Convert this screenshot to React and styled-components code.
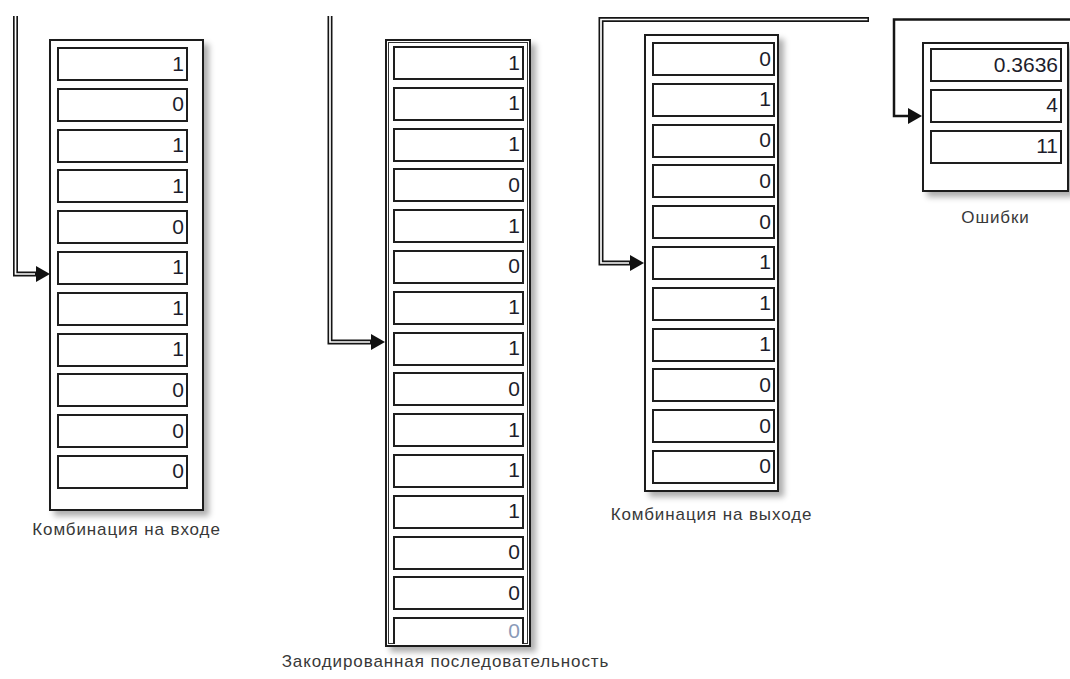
import styled, { createGlobalStyle } from "styled-components";

const GlobalStyle = createGlobalStyle`
    html, body {
        margin: 0;
        padding: 0;
        background: #fff;
        overflow: hidden;
    }
`;

const Canvas = styled.div`
    position: relative;
    width: 1070px;
    height: 679px;
    background: #fff;
    font-family: "Liberation Sans", Arial, sans-serif;
`;

const Wires = styled.svg`
    position: absolute;
    left: 0;
    top: 0;
`;

const Node = styled.div`
    position: absolute;
    left: ${p => p.$x}px;
    top: ${p => p.$y}px;
    width: ${p => p.$w}px;
    display: flex;
    flex-direction: column;
    align-items: center;
`;

const Block = styled.div`
    box-sizing: border-box;
    width: 100%;
    height: ${p => p.$h}px;
    border: 2px solid #1c1c1c;
    background: #fff;
    padding: ${p => p.$pad};
    box-shadow: ${p => p.$double ? "inset 0 0 0 1px #fff, inset 0 0 0 2px #333, " : ""}5px 5px 6px rgba(0, 0, 0, 0.32);
`;

const Column = styled.div`
    display: flex;
    flex-direction: column;
    gap: 6.8px;
`;

const Cell = styled.div`
    box-sizing: border-box;
    flex: none;
    width: ${p => p.$w}px;
    height: ${p => p.$partial ? 27 : 34}px;
    border: 2px solid #1e1e1e;
    border-bottom: ${p => p.$partial ? "none" : "2px solid #1e1e1e"};
    background: #fff;
    display: flex;
    align-items: ${p => p.$partial ? "flex-end" : "center"};
    justify-content: flex-end;
    padding: 0 2px ${p => p.$partial ? 3 : 2}px 0;
    font-size: 21px;
    line-height: 1;
    color: ${p => p.$partial ? "#8a9ab8" : "#1d1d2c"};
`;

const Label = styled.div`
    margin-top: ${p => p.$gap}px;
    margin-left: ${p => p.$shift || 0}px;
    white-space: nowrap;
    font-size: 17px;
    letter-spacing: 0.9px;
    color: #383838;
`;

const blocks = [
    {
        x: 49, y: 39, w: 155, h: 472, pad: "6px 14px 20px 6px", cellW: 131,
        values: ["1", "0", "1", "1", "0", "1", "1", "1", "0", "0", "0"],
        label: "Комбинация на входе", gap: 9
    },
    {
        x: 385, y: 39, w: 146, h: 608, pad: "5px 5px 2px 6px", cellW: 131, double: true,
        values: ["1", "1", "1", "0", "1", "0", "1", "1", "0", "1", "1", "1", "0", "0", "0"],
        partialLast: true,
        label: "Закодированная последовательность", gap: 5, shift: -25
    },
    {
        x: 644, y: 34, w: 135, h: 458, pad: "6px 2px 7px 6px", cellW: 123,
        values: ["0", "1", "0", "0", "0", "1", "1", "1", "0", "0", "0"],
        label: "Комбинация на выходе", gap: 13
    },
    {
        x: 922, y: 42, w: 147, h: 150, pad: "4px 5px 26px 6px", cellW: 132,
        values: ["0.3636", "4", "11"],
        label: "Ошибки", gap: 16
    }
];

function DoubleWire({ d, inner }) {
    return (
        <g fill="none" strokeLinejoin="miter">
            <path d={d} stroke="#151515" strokeWidth="5" />
            <path d={inner || d} stroke="#fff" strokeWidth="1.7" />
        </g>
    );
}

function Arrow({ x, y }) {
    return <polygon points={`${x - 14},${y - 8} ${x},${y} ${x - 14},${y + 8}`} fill="#111" />;
}

export default function App() {
    return (
        <Canvas>
            <GlobalStyle />
            <Wires width="1070" height="679" viewBox="0 0 1070 679">
                <DoubleWire d="M15.5 16 V274 H37" inner="M15.5 16 V274 H35" />
                <Arrow x={50} y={274} />
                <DoubleWire d="M330 16 V342 H372" inner="M330 16 V342 H370" />
                <Arrow x={385} y={342} />
                <DoubleWire d="M869 19.5 H601 V263 H631" inner="M867.5 19.5 H601 V263 H629" />
                <Arrow x={644} y={263} />
                <path d="M1072 19.5 H894 V116 H909" fill="none" stroke="#151515" strokeWidth="2.5" />
                <Arrow x={922} y={116} />
            </Wires>
            {blocks.map((b, i) => (
                <Node key={i} $x={b.x} $y={b.y} $w={b.w}>
                    <Block $h={b.h} $pad={b.pad} $double={b.double}>
                        <Column>
                            {b.values.map((v, j) => (
                                <Cell key={j} $w={b.cellW} $partial={b.partialLast && j === b.values.length - 1}>
                                    {v}
                                </Cell>
                            ))}
                        </Column>
                    </Block>
                    <Label $gap={b.gap} $shift={b.shift}>{b.label}</Label>
                </Node>
            ))}
        </Canvas>
    );
}
